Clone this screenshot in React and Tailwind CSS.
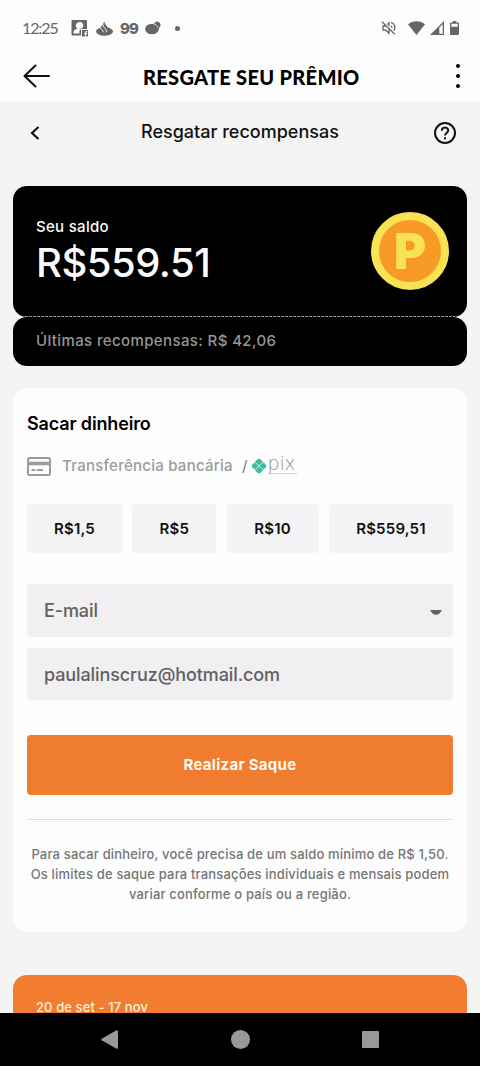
const AMOUNTS = [
  { label: "R$1,5", width: "w-[95px]" },
  { label: "R$5", width: "w-[84px]" },
  { label: "R$10", width: "w-[92px]" },
  { label: "R$559,51", width: "w-[124px]" },
];

function StatusBar() {
  return (
    <div className="flex h-[50px] shrink-0 items-center bg-[#fdfdfd] pt-1.5 pl-[22px] pr-[21px] text-[#666]">
      <span className="w-[49px] font-['Lato'] text-[16px] leading-none tracking-[-1.1px]">12:25</span>
      <svg className="h-[17px] w-[17px]" viewBox="0 0 17 17" fill="currentColor">
        <path fillRule="evenodd" d="M1.500 0H15a1 1 0 0 1 1 1v8h-5a1 1 0 0 0-1 1v5.500H1.500a1 1 0 0 1-1-1V1a1 1 0 0 1 1-1zM8.300 2a3.500 3.500 0 0 0-1.600 6.600C4.500 9.300 2.800 10.300 2.500 12v1.500h6V10.500l2-2A3.500 3.500 0 0 0 8.300 2z" />
        <path fillRule="evenodd" d="M11 10h6v6.500h-1.800V14h1.200v-1.100h-1.200c0-.7.400-.9 1.200-.8v-1c-1.600-.3-2.400.4-2.400 1.800h-.9V14h.9v2.500h-3z" />
      </svg>
      <svg className="ml-[8px] h-[15px] w-[17px]" viewBox="0 0 17 15" fill="currentColor">
        <ellipse cx="8.500" cy="10.500" rx="8.500" ry="4.200" />
        <path d="M4.500 8c0-2 1-3 2.500-4.500 0 2 3.500 4 4 7.500l-3 1z" />
        <path d="M8.700 0c-.5 1.300 0 2.200.7 3.300 1 1.500 3 3.500 2.700 5.700l-1.300 2c-.3-3-3.600-4.700-3.600-7.200C7.200 2 8 1.200 8.700 0z" />
        <path d="M7 4c.2 2.500 3.600 4 3.800 7M4.500 6.500c0 2 2.500 2.700 3.300 4.800" fill="none" stroke="#fdfdfd" strokeWidth=".9" />
      </svg>
      <span className="ml-[7px] w-[18px] font-['Inter'] text-[15px] font-extrabold leading-none tracking-[-1px]">99</span>
      <svg className="ml-[7px] h-[14px] w-[16px]" viewBox="0 0 16 14" fill="currentColor">
        <ellipse cx="7" cy="8" rx="6.900" ry="5.200" />
        <path d="M9 2.800A3.400 3.400 0 1 1 14.500 6.500L12.500 10z" />
        <path d="M8.500 3c2 .1 3.700 1.300 4.400 3.800" fill="none" stroke="#fdfdfd" strokeWidth=".7" />
      </svg>
      <span className="ml-[14px] h-[5px] w-[5px] rounded-full bg-[#666]" />
      <div className="ml-auto flex items-center">
        <svg className="h-[14px] w-[15px]" viewBox="0 0 15 14" fill="none" stroke="currentColor" strokeWidth="1.300">
          <path d="M1 0.700l12.800 12.600M5 5H2v4h2.500L8 12.300V8M6.300 3.500L8 2v3.300M9.800 4.800c.8.400 1.100 1.200 1.100 2M10 1.300c3.800 1.200 4.700 5.300 3 8.400" />
        </svg>
        <svg className="ml-[12px] h-[14px] w-[17px]" viewBox="0 0 17 14" fill="currentColor">
          <path d="M8.500 14L0 3.200C4.800-.9 12.200-.9 17 3.200z" />
        </svg>
        <svg className="ml-[5px] h-[14px] w-[14px]" viewBox="0 0 14 14" fill="currentColor">
          <path fillRule="evenodd" d="M14 0v14H0zM12.700 3.200L9.300 6.600v6.100h3.400z" />
        </svg>
        <svg className="ml-[6px] h-[14px] w-[9px]" viewBox="0 0 9 14" fill="currentColor">
          <path fillRule="evenodd" d="M2.700 0h3.600v1.400H8a1 1 0 0 1 1 1V13a1 1 0 0 1-1 1H1a1 1 0 0 1-1-1V2.400a1 1 0 0 1 1-1h1.700zM1.300 2.700v3h6.400v-3z" />
        </svg>
      </div>
    </div>
  );
}

function AppBar() {
  return (
    <header className="flex h-[51px] shrink-0 items-center bg-[#fdfdfd] pl-[23px] pr-[20px]">
      <svg className="h-6 w-7" viewBox="0 0 28 24" fill="none" stroke="#111" strokeWidth="2" strokeLinecap="round" strokeLinejoin="round">
        <path d="M26 12H1.500M12.500 1.500L1.500 12l11 10.500" />
      </svg>
      <h1 className="ml-[92px] mt-[2px] font-['Lato'] text-[20px] font-black leading-none tracking-[0.300px] text-black">RESGATE SEU PRÊMIO</h1>
      <div className="ml-auto flex flex-col gap-[6px]">
        <span className="h-1 w-1 rounded-full bg-black" />
        <span className="h-1 w-1 rounded-full bg-black" />
        <span className="h-1 w-1 rounded-full bg-black" />
      </div>
    </header>
  );
}

function Coin() {
  return (
    <div className="-mt-[2px] flex h-[78px] w-[78px] items-center justify-center rounded-full border-[8px] border-[#fae353] bg-[#f79b26] pt-[2px] font-['Inter'] text-[49px] font-black leading-none text-[#fae353]">
      P
    </div>
  );
}

function BalanceCard() {
  return (
    <section>
      <div className="flex h-[131px] items-center justify-between rounded-[14px] bg-black pl-[23px] pr-[18px] text-[#fcfcfc]">
        <div className="-mt-[2px]">
          <p className="text-[15px] font-medium leading-5 tracking-[0.3px]">Seu saldo</p>
          <p className="mt-1 text-[40px] font-medium leading-[44px] tracking-[-0.500px]">R$559.51</p>
        </div>
        <Coin />
      </div>
      <div className="mx-3 -mt-px h-px bg-[repeating-linear-gradient(90deg,#999_0_3px,#000_3px_4px)]" />
      <div className="flex h-[49px] items-center rounded-[14px] bg-black pl-[23px] text-[15px] font-medium tracking-[0.380px] text-[#969696]">
        Últimas recompensas: R$ 42,06
      </div>
    </section>
  );
}

function PixLogo() {
  return (
    <div className="flex items-center">
      <svg className="h-4 w-4" viewBox="0 0 16 16">
        <rect x="2.200" y="2.200" width="11.600" height="11.600" rx="2.500" fill="#3fc09c" transform="rotate(45 8 8)" />
        <path d="M3 4.600h1.500L8 8l3.500-3.400H13M3 11.400h1.500L8 8l3.500 3.400H13" fill="none" stroke="#d5f3ea" strokeWidth=".9" />
      </svg>
      <span className="ml-[1px] h-[15px] w-[29px] border-b border-[#d0d2d4] text-[19px] font-extralight leading-[10px] tracking-[0.7px] text-[#8d9093]">pix</span>
    </div>
  );
}

function WithdrawCard() {
  return (
    <section className="mt-[22px] h-[544px] rounded-[14px] bg-[#fdfdfd] px-[14px] pt-[24px]">
      <h2 className="text-[18px] font-semibold leading-6 tracking-[-0.150px] text-black">Sacar dinheiro</h2>
      <div className="mt-[18px] flex h-6 items-center text-[#9b9b9b]">
        <svg className="h-[19px] w-[24px]" viewBox="0 0 24 19" fill="none" stroke="currentColor" strokeWidth="2">
          <rect x="1" y="1" width="22" height="17" rx="1.500" />
          <path d="M1 6.500h22" strokeWidth="3.500" />
          <path d="M4.500 13h3.500M9.500 13h6.500" />
        </svg>
        <span className="ml-[11px] w-[180px] whitespace-nowrap pt-px text-[15px] font-medium tracking-[0.250px]">Transferência bancária</span>
        <span className="w-[9px] text-[15px] text-[#777]">/</span>
        <PixLogo />
      </div>
      <div className="mt-[26px] flex justify-between">
        {AMOUNTS.map((amount) => (
          <button key={amount.label} className={`h-[49px] rounded-[4px] bg-[#f3f2f4] pt-px text-[15px] font-semibold tracking-[0.200px] text-[#111] ${amount.width}`}>
            {amount.label}
          </button>
        ))}
      </div>
      <div className="mt-[31px] flex h-[53px] items-center justify-between rounded-[4px] bg-[#f1eff2] pl-[17px] pr-[11px] text-[18px] font-medium tracking-[-0.100px] text-[#616161]">
        <span>E-mail</span>
        <svg className="mt-[3px] h-[5px] w-[12px]" viewBox="0 0 12 5" fill="#626165">
          <path d="M0 0h12L9.500 3.500Q6 6 2.500 3.500z" />
        </svg>
      </div>
      <div className="mt-[11px] flex h-[52px] items-center rounded-[4px] bg-[#f1eff2] pl-[17px] text-[18px] font-medium tracking-[-0.100px] text-[#616161]">
        paulalinscruz@hotmail.com
      </div>
      <button className="mt-[35px] h-[60px] w-full rounded-[4px] bg-[#f07d2f] text-[15px] font-bold tracking-[0.300px] text-[#fff9f2]">Realizar Saque</button>
      <hr className="mt-[24px] border-[#ddd]" />
      <p className="-mx-2 mt-[24px] text-center text-[13px] font-medium leading-5 tracking-[0.170px] text-[#757575]">
        Para sacar dinheiro, você precisa de um saldo mínimo de R$ 1,50.<br />
        Os limites de saque para transações individuais e mensais podem<br />
        variar conforme o país ou a região.
      </p>
    </section>
  );
}

function NavBar() {
  return (
    <nav className="flex h-[53px] shrink-0 items-center justify-between bg-black pl-[101px] pr-[101px]">
      <svg className="h-[19px] w-[17px]" viewBox="0 0 17 19" fill="#9a979a">
        <path d="M15.500.3Q17 0 17 1.500v16q0 1.500-1.500 1.200L.7 10.200q-1-.7 0-1.400z" />
      </svg>
      <span className="h-[19px] w-[19px] rounded-full bg-[#9a979a]" />
      <span className="h-[17px] w-[17px] rounded-[1px] bg-[#9a979a]" />
    </nav>
  );
}

export default function App() {
  return (
    <div className="flex h-[1066px] w-[480px] flex-col overflow-hidden bg-[#f4f4f4] font-['Inter',sans-serif]">
      <StatusBar />
      <AppBar />
      <main className="min-h-0 flex-1 overflow-hidden px-[13px]">
        <div className="flex h-[85px] items-start pl-[17px] pr-[10px] pt-[20px]">
          <svg className="mt-[5px] h-[14px] w-[10px]" viewBox="0 0 10 14" fill="none" stroke="#111" strokeWidth="2.200">
            <path d="M8.500 1L2 7l6.500 6" />
          </svg>
          <h2 className="ml-[101px] -mt-px text-[18px] font-medium leading-6 text-[#111]">Resgatar recompensas</h2>
          <svg className="ml-auto h-6 w-6" viewBox="0 0 24 24" fill="none" stroke="#111" strokeWidth="2">
            <circle cx="12" cy="12" r="10" />
            <path d="M8.800 9.800c0-4.200 6.400-4.200 6.400-.2 0 2.400-3.200 2.500-3.200 5" />
            <path d="M12 16.200v2" />
          </svg>
        </div>
        <BalanceCard />
        <WithdrawCard />
        <section className="mt-[43px] h-[120px] rounded-[14px] bg-[#f27d31] pl-[23px] pt-[22px] text-[13px] font-medium leading-5 tracking-[0.100px] text-[#fff0d8]">
          20 de set - 17 nov
        </section>
      </main>
      <NavBar />
    </div>
  );
}
